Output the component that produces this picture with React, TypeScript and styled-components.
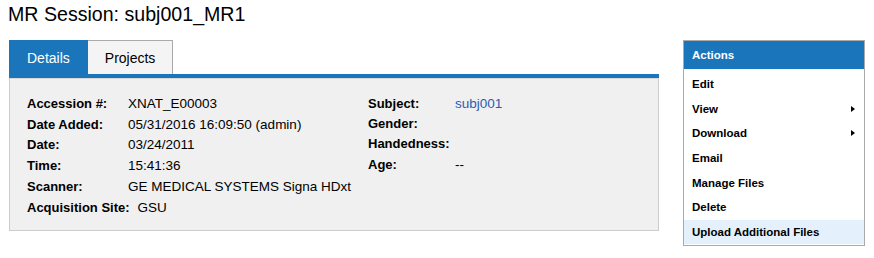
import React from "react";
import styled, { createGlobalStyle } from "styled-components";

const GlobalStyle = createGlobalStyle`
  html, body { margin: 0; padding: 0; background: #fff; }
  body { font-family: Arial, "Liberation Sans", Helvetica, sans-serif; color: #000; }
`;

const BLUE = "#1a75bb";

const Page = styled.div`
  padding: 3px 9px 0 9px;
  width: 874px;
  box-sizing: border-box;
`;

const Title = styled.h1`
  margin: 0 0 0 -1px;
  font-size: 19.6px;
  font-weight: normal;
  line-height: 23px;
  height: 37px;
`;

const Main = styled.div`
  display: flex;
  align-items: flex-start;
  gap: 24px;
`;

const Left = styled.div`
  width: 650px;
`;

const TabBar = styled.div`
  display: flex;
  height: 34px;
`;

const Tab = styled.div<{ $active?: boolean }>`
  box-sizing: border-box;
  height: 34px;
  padding: 0 17px;
  display: flex;
  align-items: center;
  font-size: 14px;
  color: ${(p) => (p.$active ? "#fff" : "#000")};
  background: ${(p) => (p.$active ? BLUE : "#f4f4f4")};
  border: 1px solid ${(p) => (p.$active ? BLUE : "#aaa")};
  border-bottom: none;
  border-left: ${(p) => (p.$active ? `1px solid ${BLUE}` : "none")};
`;

const BlueBar = styled.div`
  height: 4px;
  background: ${BLUE};
`;

const Panel = styled.div`
  box-sizing: border-box;
  height: 153px;
  background: #f0f0f0;
  border: 1px solid #ccc;
  border-top: 1px solid #d8d8d8;
  padding: 14px 0 0 17px;
  display: grid;
  grid-template-columns: 341px 1fr;
  font-size: 13px;
`;

const Column = styled.div`
  display: flex;
  flex-direction: column;
`;

const Row = styled.div<{ $h: number }>`
  display: flex;
  height: ${(p) => p.$h}px;
  align-items: center;
`;

const Label = styled.span<{ $w: number; $gap?: number }>`
  font-weight: bold;
  min-width: ${(p) => p.$w}px;
  margin-right: ${(p) => p.$gap ?? 5}px;
`;

const Value = styled.span`
  white-space: nowrap;
  font-size: 13.5px;
`;

const Link = styled.a`
  color: #2a5db0;
  text-decoration: none;
`;

const Actions = styled.div`
  width: 182px;
  box-sizing: border-box;
  border: 1px solid #aaa;
  font-size: 11.5px;
  font-weight: bold;
`;

const ActionsHeader = styled.div`
  height: 28px;
  background: ${BLUE};
  color: #fff;
  display: flex;
  align-items: center;
  padding-left: 8px;
`;

const ActionList = styled.div`
  padding: 3px 0 1px;
`;

const ActionItem = styled.div<{ $hover?: boolean }>`
  height: 24.6px;
  display: flex;
  align-items: center;
  justify-content: space-between;
  padding: 0 9px 0 8px;
  background: ${(p) => (p.$hover ? "#e4f1fd" : "transparent")};
`;

const Arrow = styled.span`
  width: 0;
  height: 0;
  border-left: 4px solid #000;
  border-top: 3.5px solid transparent;
  border-bottom: 3.5px solid transparent;
`;

const leftRows: [string, React.ReactNode, number][] = [
  ["Accession #:", "XNAT_E00003", 5],
  ["Date Added:", "05/31/2016 16:09:50 (admin)", 5],
  ["Date:", "03/24/2011", 5],
  ["Time:", "15:41:36", 5],
  ["Scanner:", "GE MEDICAL SYSTEMS Signa HDxt", 5],
  ["Acquisition Site:", "GSU", 8],
];

const rightRows: [string, React.ReactNode][] = [
  ["Subject:", <Link href="#">subj001</Link>],
  ["Gender:", ""],
  ["Handedness:", ""],
  ["Age:", "--"],
];

const actions: { label: string; sub?: boolean; hover?: boolean }[] = [
  { label: "Edit" },
  { label: "View", sub: true },
  { label: "Download", sub: true },
  { label: "Email" },
  { label: "Manage Files" },
  { label: "Delete" },
  { label: "Upload Additional Files", hover: true },
];

export default function App() {
  return (
    <>
      <GlobalStyle />
      <Page>
        <Title>MR Session: subj001_MR1</Title>
        <Main>
          <Left>
            <TabBar>
              <Tab $active>Details</Tab>
              <Tab>Projects</Tab>
            </TabBar>
            <BlueBar />
            <Panel>
              <Column>
                {leftRows.map(([l, v, g]) => (
                  <Row key={l} $h={20.8}>
                    <Label $w={96} $gap={g}>{l}</Label>
                    <Value>{v}</Value>
                  </Row>
                ))}
              </Column>
              <Column>
                {rightRows.map(([l, v]) => (
                  <Row key={l} $h={20.3}>
                    <Label $w={82}>{l}</Label>
                    <Value>{v}</Value>
                  </Row>
                ))}
              </Column>
            </Panel>
          </Left>
          <Actions>
            <ActionsHeader>Actions</ActionsHeader>
            <ActionList>
              {actions.map((a) => (
                <ActionItem key={a.label} $hover={a.hover}>
                  <span>{a.label}</span>
                  {a.sub && <Arrow />}
                </ActionItem>
              ))}
            </ActionList>
          </Actions>
        </Main>
      </Page>
    </>
  );
}
